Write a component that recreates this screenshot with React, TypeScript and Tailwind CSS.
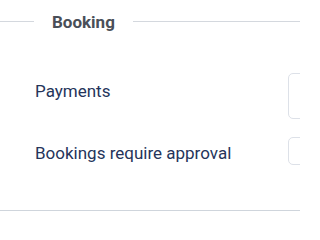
import React from "react"

function Row({ label, boxClass, rowClass }: { label: string; boxClass: string; rowClass: string }) {
  return (
    <div className={`flex ${rowClass}`}>
      <div className="w-[288px] shrink-0 pl-[35px] text-[17px] leading-6 text-[#25345a]">{label}</div>
      <div className={`w-[200px] shrink-0 rounded-[5px] border border-[#dde1e8] bg-white ${boxClass}`} />
    </div>
  )
}

export default function App() {
  return (
    <div className="h-[224px] w-[300px] overflow-hidden bg-white font-['Roboto',sans-serif]">
      {/* Legend */}
      <div className="flex h-[43px] items-center">
        <div className="h-px w-[34px] bg-[#d4d8de]" />
        <span className="px-[18px] text-[17px] font-bold leading-6 text-[#4a4f58]">Booking</span>
        <div className="h-px flex-1 bg-[#d4d8de]" />
      </div>

      <Row label="Payments" rowClass="mt-[30px] items-start [&>div:first-child]:pt-[6px]" boxClass="h-[46px]" />
      <Row label="Bookings require approval" rowClass="mt-[18px] items-center [&>div:first-child]:pt-[4px]" boxClass="h-[28px]" />

      <div className="mt-[45px] h-px w-full bg-[#cfd5dc]" />
    </div>
  )
}
